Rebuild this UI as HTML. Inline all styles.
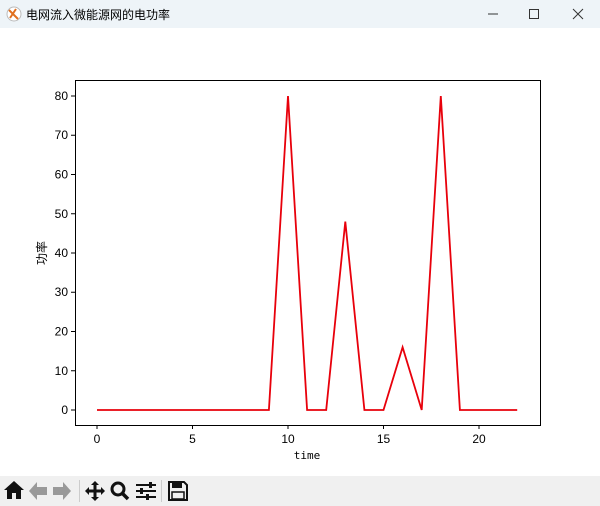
<!DOCTYPE html>
<html><head><meta charset="utf-8"><style>
body{margin:0;width:600px;height:506px;overflow:hidden;background:#fff;font-family:"Liberation Sans","Noto Sans CJK SC",sans-serif}
</style></head><body>
<svg width="600" height="506" xmlns="http://www.w3.org/2000/svg" style="position:absolute;left:0;top:0">
<rect x="0" y="0" width="600" height="28" fill="#eef4f8"/>
<circle cx="14" cy="14" r="7" fill="#fff" stroke="#bbb"/>
<path d="M9 10 L18 19 M10 18 L16 9" stroke="#e07020" stroke-width="2"/>
<text x="26" y="19" font-size="12" fill="#000" font-family="'Liberation Sans','Noto Sans CJK SC',sans-serif">电网流入微能源网的电功率</text>
<path d="M488 14 H498" stroke="#333" stroke-width="1"/>
<rect x="529.5" y="9.5" width="9" height="9" fill="none" stroke="#333"/>
<path d="M573 9 L583 19 M583 9 L573 19" stroke="#333"/>
<rect x="75.5" y="80.5" width="465" height="345" fill="none" stroke="#000"/>
<g stroke="#000">
<path d="M97 425v4M192.5 425v4M288 425v4M383.5 425v4M479 425v4"/>
<path d="M75 410h-4M75 370.75h-4M75 331.5h-4M75 292.25h-4M75 253h-4M75 213.75h-4M75 174.5h-4M75 135.25h-4M75 96h-4"/>
</g>
<g font-size="12" font-family="'Liberation Sans',sans-serif" fill="#000" text-anchor="middle">
<text x="97" y="443">0</text><text x="192.5" y="443">5</text><text x="288" y="443">10</text><text x="383.5" y="443">15</text><text x="479" y="443">20</text>
</g>
<text x="307" y="459" font-size="11" text-anchor="middle" font-family="'DejaVu Sans Mono',monospace">time</text>
<g font-size="12" font-family="'Liberation Sans',sans-serif" fill="#000" text-anchor="end">
<text x="68" y="414">0</text><text x="68" y="375">10</text><text x="68" y="335.5">20</text><text x="68" y="296">30</text><text x="68" y="257">40</text><text x="68" y="218">50</text><text x="68" y="178.5">60</text><text x="68" y="139">70</text><text x="68" y="100">80</text>
</g>
<text transform="translate(46 253) rotate(-90)" font-size="12" text-anchor="middle" font-family="'Noto Sans CJK SC',sans-serif">功率</text>
<polyline fill="none" stroke="#e8000b" stroke-width="1.8" points="97,410 268.9,410 288,96 307.1,410 326.2,410 345.3,221.6 364.4,410 383.5,410 402.6,347.2 421.7,410 440.8,96 459.9,410 517.2,410"/>
<rect x="0" y="476" width="600" height="30" fill="#f0f0f0"/>
<g transform="translate(0 476)">
<path d="M4 14 L14 5 L24 14 H21 V23 H16 V17 H12 V23 H7 V14Z" fill="#111"/>
<path d="M29 15 L37 6 V11 H47 V19 H37 V24Z" fill="#999"/>
<path d="M71 15 L63 6 V11 H53 V19 H63 V24Z" fill="#999"/>
<line x1="79.5" y1="4" x2="79.5" y2="26" stroke="#ccc"/>
<path d="M95 5 L99 9 H96.5 V13.5 H101 V11 L105 15 L101 19 V16.5 H96.5 V21 H99 L95 25 L91 21 H93.5 V16.5 H89 V19 L85 15 L89 11 V13.5 H93.5 V9 H91Z" fill="#111"/>
<circle cx="118" cy="13" r="6" fill="none" stroke="#111" stroke-width="3"/>
<path d="M122 17 L128 23" stroke="#111" stroke-width="3.5"/>
<g stroke="#111" stroke-width="2"><path d="M136 9H156M136 15H156M136 21H156"/></g>
<g fill="#111"><rect x="149" y="6" width="3" height="6"/><rect x="140" y="12" width="3" height="6"/><rect x="146" y="18" width="3" height="6"/></g>
<line x1="161.5" y1="4" x2="161.5" y2="26" stroke="#ccc"/>
<path d="M169 6 H184 L187 9 V24 H169Z" fill="none" stroke="#111" stroke-width="2"/>
<rect x="172" y="6" width="10" height="6" fill="#111"/>
<rect x="172" y="16" width="12" height="7" fill="none" stroke="#111" stroke-width="1.5"/>
</g>
</svg>
</body></html>
